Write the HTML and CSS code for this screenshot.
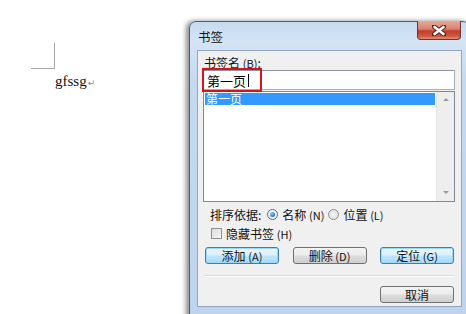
FILE: index.html
```html
<html>
<head>
    <link rel="stylesheet" href="styles.css">
</head>
<body>
    <div class="page">
        <div class="corner"></div>
        <div class="docText">gfssg<span class="ret">&#8629;</span></div>
    </div>

    <div class="dialog">
        <div class="titleBar">
            <span class="title">书签</span>
            <div class="closeBtn">
                <svg width="14" height="11" viewBox="0 0 14 11">
                    <path d="M2 1.5 L12 9.5 M12 1.5 L2 9.5" stroke="#4a2320" stroke-width="4.4" stroke-linecap="round"/>
                    <path d="M2.5 2 L11.5 9 M11.5 2 L2.5 9" stroke="#ffffff" stroke-width="2.6" stroke-linecap="round"/>
                </svg>
            </div>
        </div>
        <div class="panel">
            <div class="label">书签名 <span class="key">(B)</span>:</div>
            <div class="nameField">
                <span class="nameText">第一页</span><span class="caret"></span>
                <div class="redMark"></div>
            </div>
            <div class="list">
                <div class="items">
                    <div class="item selected">第一页</div>
                </div>
                <div class="scrollbar">
                    <span class="arrowUp"></span>
                    <span class="arrowDown"></span>
                </div>
            </div>
            <div class="sortRow">
                <span>排序依据:</span>
                <span class="radio checked"></span>
                <span>名称 <span class="key">(N)</span></span>
                <span class="radio"></span>
                <span>位置 <span class="key">(L)</span></span>
            </div>
            <div class="checkRow">
                <span class="checkbox"></span>
                <span>隐藏书签 <span class="key">(H)</span></span>
            </div>
            <div class="buttons">
                <div class="btn focus">添加 <span class="key">(A)</span></div>
                <div class="btn">删除 <span class="key">(D)</span></div>
                <div class="btn focus">定位 <span class="key">(G)</span></div>
            </div>
            <div class="separator"></div>
            <div class="buttons bottom">
                <div class="btn">取消</div>
            </div>
        </div>
    </div>
</body>
</html>
```

FILE: styles.css
```css
body {
    margin: 0;
    width: 466px;
    height: 314px;
    overflow: hidden;
    background: #ffffff;
    position: relative;
    font-family: "Noto Sans CJK SC", "Liberation Sans", sans-serif;
}

.page {
    padding: 43px 0 0 31px;
}

.corner {
    width: 23px;
    height: 25px;
    border-right: 1px solid #a6a6a6;
    border-bottom: 1px solid #a6a6a6;
}

.docText {
    margin: 3px 0 0 24px;
    font-family: "Liberation Serif", serif;
    font-size: 15px;
    color: #111;
    line-height: 18px;
}

.ret {
    font-family: "DejaVu Sans", sans-serif;
    font-size: 9px;
    color: #8a8a8a;
    margin-left: 1px;
}

.dialog {
    position: absolute;
    left: 189px;
    top: 21px;
    width: 281px;
    height: 300px;
    box-sizing: border-box;
    border: 1px solid #4f5f73;
    border-radius: 7px 7px 0 0;
    background: linear-gradient(to bottom, #c6daf0 0px, #d4e4f5 20px, #c5d9ef 60px, #bfd4ec 100%);
    box-shadow: -3px 0 5px rgba(0, 0, 0, 0.45);
    padding: 0 7px 6px 7px;
}

.titleBar {
    height: 28px;
    position: relative;
}

.title {
    position: absolute;
    left: 1px;
    top: 5px;
    font-size: 12.5px;
    color: #111;
}

.closeBtn {
    position: absolute;
    right: 1px;
    top: -1px;
    width: 44px;
    height: 19px;
    box-sizing: border-box;
    border: 1px solid #6b3530;
    border-top: none;
    border-radius: 0 0 4px 4px;
    background: linear-gradient(to bottom, #eaa797 0%, #d9806e 45%, #c13d2b 55%, #cf5a45 85%, #e2927a 100%);
    display: flex;
    align-items: center;
    justify-content: center;
}

.panel {
    height: 257px;
    box-sizing: border-box;
    border: 1px solid #93a7bf;
    background: #f0f0f0;
    padding: 5px 6px 0 5px;
    font-size: 12px;
    color: #111;
}

.key {
    font-size: 11px;
}

.label {
    height: 14px;
    line-height: 14px;
    padding-left: 1px;
}

.nameField {
    position: relative;
    height: 20px;
    box-sizing: border-box;
    border: 1px solid #abadb3;
    border-top-color: #8f949b;
    background: #fff;
    display: flex;
    align-items: center;
    padding-left: 3px;
}

.nameText {
    font-size: 13px;
    color: #000;
}

.caret {
    width: 1px;
    height: 13px;
    background: #000;
    margin-left: 2px;
}

.redMark {
    position: absolute;
    left: -2px;
    top: -3px;
    width: 60px;
    height: 24px;
    box-sizing: border-box;
    border: 2px solid #d3131d;
}

.list {
    margin-top: 1px;
    height: 111px;
    box-sizing: border-box;
    border: 1px solid #828790;
    background: #fff;
    display: flex;
}

.items {
    flex: 1;
    padding: 1px 1px 0 1px;
}

.item {
    height: 12px;
    line-height: 12px;
    font-size: 12px;
    padding-left: 1px;
}

.item.selected {
    background: #3399ff;
    color: #fff;
}

.scrollbar {
    width: 17px;
    background: #eeeeee;
    border-left: 1px solid #e3e3e3;
    position: relative;
}

.arrowUp, .arrowDown {
    position: absolute;
    left: 6px;
    width: 0;
    height: 0;
    border-left: 3px solid transparent;
    border-right: 3px solid transparent;
}

.arrowUp {
    top: 6px;
    border-bottom: 3px solid #9a9a9a;
}

.arrowDown {
    bottom: 7px;
    border-top: 3px solid #9a9a9a;
}

.sortRow, .checkRow {
    display: flex;
    align-items: center;
    padding-left: 7px;
    height: 19px;
}

.sortRow {
    margin-top: 3px;
}

.radio {
    width: 11px;
    height: 11px;
    box-sizing: border-box;
    border-radius: 50%;
    border: 1px solid #8f8f8f;
    background: radial-gradient(circle, #f4f4f4 0%, #dcdcdc 100%);
    margin: 0 4px 0 4px;
    position: relative;
}

.radio.checked {
    margin-left: 6px;
    border-color: #4a6d8c;
    background: radial-gradient(circle, #ffffff 0%, #e8eef4 100%);
}

.radio.checked::after {
    content: "";
    position: absolute;
    left: 2px;
    top: 2px;
    width: 5px;
    height: 5px;
    border-radius: 50%;
    background: radial-gradient(circle at 40% 35%, #9ad3f5 0%, #1f6fb4 70%, #174b7a 100%);
}

.checkbox {
    width: 11px;
    height: 11px;
    box-sizing: border-box;
    border: 1px solid #8f8f8f;
    background: linear-gradient(135deg, #dcdcdc 0%, #f6f6f6 100%);
    margin: 0 4px 0 1px;
}

.buttons {
    display: flex;
    justify-content: space-between;
    padding: 0 1px 0 2px;
    margin-top: 4px;
}

.btn {
    width: 74px;
    height: 17px;
    box-sizing: border-box;
    border: 1px solid #707070;
    border-radius: 3px;
    background: linear-gradient(to bottom, #f3f3f3 0%, #ebebeb 48%, #dddddd 52%, #cfcfcf 100%);
    font-size: 12px;
    line-height: 15px;
    text-align: center;
    color: #111;
}

.btn.focus {
    border-color: #3c7fb1;
    box-shadow: inset 0 0 0 1px #9fd8f5;
    background: linear-gradient(to bottom, #eaf6fd 0%, #d9f0fc 48%, #bee6fd 52%, #a7d9f5 100%);
}

.separator {
    margin: 11px 1px 0 1px;
    height: 1px;
    background: #dcdcdc;
    border-bottom: 1px solid #ffffff;
}

.buttons.bottom {
    justify-content: flex-end;
    margin-top: 9px;
}
```
